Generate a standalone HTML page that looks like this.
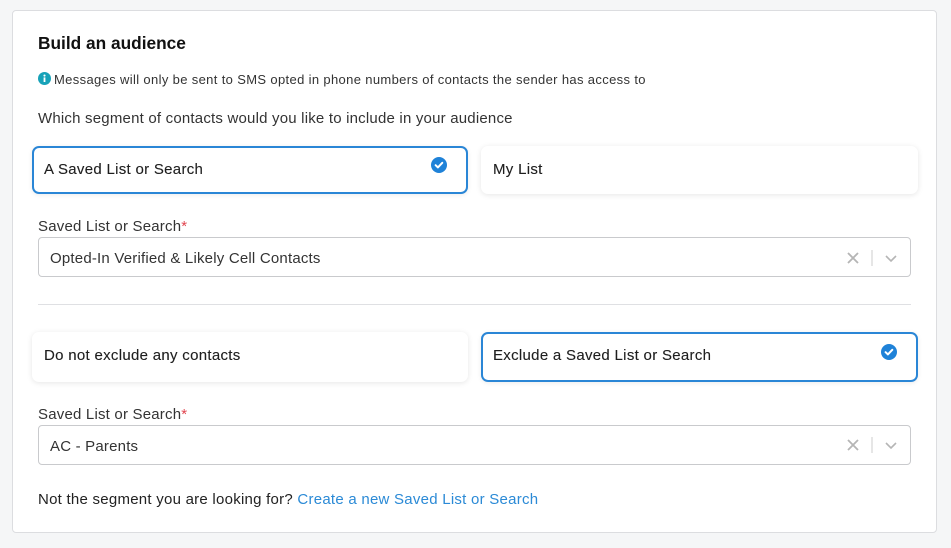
<!DOCTYPE html>
<html><head><style>
*{box-sizing:border-box;margin:0;padding:0}
body{width:951px;height:548px;background:#f5f6f7;font-family:"Liberation Sans",sans-serif;color:#222;position:relative;overflow:hidden}
.card{position:absolute;left:12px;top:10px;width:925px;height:523px;background:#fff;border:1px solid #dcdde0;border-radius:4px}
.a{position:absolute;white-space:nowrap}
.opt{position:absolute;background:#fff;border-radius:7px;box-shadow:0 1px 6px rgba(0,0,0,.10);font-size:15px;letter-spacing:.3px;padding-left:12px;display:flex;align-items:center;color:#1e1e1e;-webkit-text-stroke:.12px #1e1e1e}
.sel{border:2px solid #2a86d6;box-shadow:0 1px 5px rgba(0,0,0,.08);padding-left:10px}
.inp{position:absolute;left:38px;width:873px;height:40px;border:1px solid #c9cacd;border-radius:4px;font-size:15px;letter-spacing:.2px;color:#333;padding-left:11px;padding-top:2px;display:flex;align-items:center}
.lbl{font-size:15px;color:#333;letter-spacing:.2px}
.lbl b{color:#e0454f;font-weight:normal}
</style></head><body>
<div class="card"></div>
<div class="a" style="left:38px;top:33px;font-size:17.3px;font-weight:bold;color:#111">Build an audience</div>
<svg class="a" style="left:38px;top:72px" width="13" height="13" viewBox="0 0 13 13"><circle cx="6.5" cy="6.5" r="6.5" fill="#17a2b8"/><rect x="5.6" y="5.4" width="1.8" height="4.6" fill="#fff"/><circle cx="6.5" cy="3.6" r="1.05" fill="#fff"/></svg>
<div class="a" style="left:54px;top:72px;font-size:13px;color:#333;letter-spacing:.35px">Messages will only be sent to SMS opted in phone numbers of contacts the sender has access to</div>
<div class="a" style="left:38px;top:110px;font-size:15px;color:#333;letter-spacing:.2px">Which segment of contacts would you like to include in your audience</div>

<div class="opt sel" style="left:32px;top:146px;width:436px;height:48px;padding-bottom:2px">A Saved List or Search</div>
<svg class="a" style="left:431px;top:157px" width="16" height="16" viewBox="0 0 16 16"><circle cx="8" cy="8" r="8" fill="#1f82d8"/><path d="M4.6 8.2l2.3 2.2 4.4-4.6" stroke="#fff" stroke-width="2" fill="none" stroke-linecap="round" stroke-linejoin="round"/></svg>
<div class="opt" style="left:481px;top:146px;width:437px;height:48px;padding-bottom:2px">My List</div>

<div class="a lbl" style="left:38px;top:218px">Saved List or Search<b>*</b></div>
<div class="inp" style="top:237px">Opted-In Verified &amp; Likely Cell Contacts</div>
<svg class="a" style="left:845px;top:250px" width="60" height="16" viewBox="0 0 60 16"><path d="M3 3l10 10M13 3L3 13" stroke="#b5b5b5" stroke-width="1.8"/><path d="M27 0v16" stroke="#ccc" stroke-width="1"/><path d="M41 6l5 5 5-5" stroke="#b5b5b5" stroke-width="1.6" fill="none"/></svg>

<div class="a" style="left:38px;top:304px;width:873px;height:1px;background:#dfe0e3"></div>

<div class="opt" style="left:32px;top:332px;width:436px;height:50px;padding-bottom:4px">Do not exclude any contacts</div>
<div class="opt sel" style="left:481px;top:332px;width:437px;height:50px;padding-bottom:4px">Exclude a Saved List or Search</div>
<svg class="a" style="left:881px;top:344px" width="16" height="16" viewBox="0 0 16 16"><circle cx="8" cy="8" r="8" fill="#1f82d8"/><path d="M4.6 8.2l2.3 2.2 4.4-4.6" stroke="#fff" stroke-width="2" fill="none" stroke-linecap="round" stroke-linejoin="round"/></svg>

<div class="a lbl" style="left:38px;top:406px">Saved List or Search<b>*</b></div>
<div class="inp" style="top:425px">AC - Parents</div>
<svg class="a" style="left:845px;top:437px" width="60" height="16" viewBox="0 0 60 16"><path d="M3 3l10 10M13 3L3 13" stroke="#b5b5b5" stroke-width="1.8"/><path d="M27 0v16" stroke="#ccc" stroke-width="1"/><path d="M41 6l5 5 5-5" stroke="#b5b5b5" stroke-width="1.6" fill="none"/></svg>

<div class="a" style="left:38px;top:491px;font-size:15px;color:#222;letter-spacing:.25px">Not the segment you are looking for? <span style="color:#2b8ad6">Create a new Saved List or Search</span></div>
</body></html>
